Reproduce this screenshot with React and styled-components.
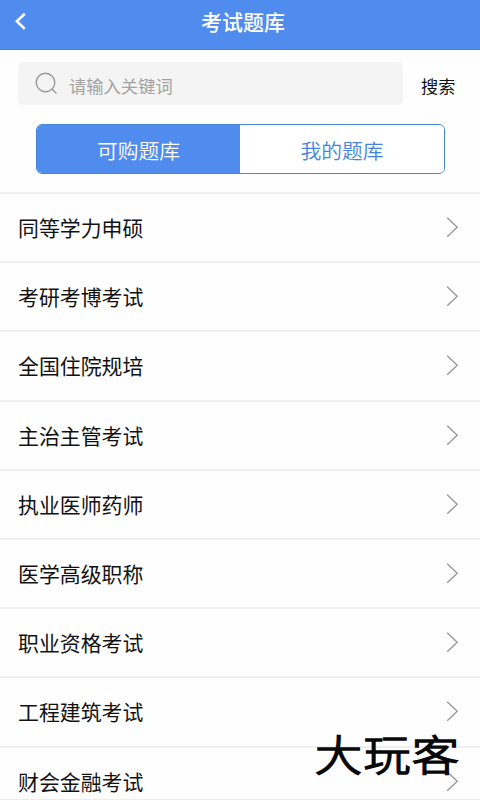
import React from "react";
import styled, { createGlobalStyle } from "styled-components";

const GlobalStyle = createGlobalStyle`
  *, *::before, *::after { box-sizing: border-box; }
  html, body { margin: 0; background: #fff; }
  body { overflow: hidden; }
`;

const Screen = styled.div`
  position: relative;
  display: flex;
  flex-direction: column;
  width: 480px;
  height: 800px;
  overflow: hidden;
  background: #fefefe;
  border-bottom: 1px solid #eee;
  color: #111;
  font-family: "Noto Sans CJK SC", sans-serif;
`;

const Header = styled.header`
  flex: none;
  display: grid;
  grid-template-columns: 42px 1fr 36px;
  align-items: center;
  height: 50px;
  padding-bottom: 7px;
  background: #508cee;
  border-bottom: 1px solid #447fe6;
`;

const BackButton = styled.button`
  display: flex;
  padding: 0 0 0 14px;
  border: 0;
  background: none;
  color: #fff;
`;

const Title = styled.h1`
  margin: 0;
  color: #fff;
  font-size: 21px;
  font-weight: 500;
  line-height: 30px;
  text-align: center;
`;

const SearchBar = styled.div`
  flex: none;
  display: flex;
  align-items: center;
  height: 43px;
  margin: 12px 0 0 18px;
`;

const SearchField = styled.div`
  display: flex;
  align-items: center;
  gap: 11px;
  width: 385px;
  height: 43px;
  padding-left: 17px;
  border-radius: 5px;
  background: #f4f4f4;
  color: #999;
`;

const Placeholder = styled.span`
  padding-top: 5px;
  color: #a2a2a2;
  font-size: 17.3px;
  font-weight: 400;
  line-height: 26px;
`;

const SearchButton = styled.button`
  padding: 5px 0 0;
  margin-left: 18px;
  border: 0;
  background: none;
  color: #111;
  font: 400 17.2px/26px "Noto Sans CJK SC", sans-serif;
`;

const Tabs = styled.div`
  flex: none;
  display: grid;
  grid-template-columns: 203px 1fr;
  width: 409px;
  height: 50px;
  margin: 19px 0 18px 36px;
  border: 1px solid #4484d9;
  border-radius: 6px;
  overflow: hidden;
`;

const Tab = styled.button`
  padding: 2px 0 0;
  border: 0;
  background: ${(p) => (p.$active ? "#508cee" : "#fff")};
  color: ${(p) => (p.$active ? "#fff" : "#4484dc")};
  font: 350 20.8px/46px "Noto Sans CJK SC", sans-serif;
`;

const List = styled.ul`
  flex: none;
  margin: 0;
  padding: 0;
  list-style: none;
`;

const Row = styled.li`
  display: flex;
  align-items: center;
  justify-content: space-between;
  height: 69.2px;
  padding: 0 21px 1px 18px;
  border-top: 2px solid #f0f0f0;
  color: #999;
`;

const RowLabel = styled.span`
  color: #111;
  font-size: 20.9px;
  line-height: 30px;
`;

const Watermark = styled.div`
  position: absolute;
  left: 315px;
  top: 728px;
  color: #090909;
  font-size: 47px;
  font-weight: 300;
  line-height: 50px;
  letter-spacing: 1.5px;
  white-space: nowrap;
  transform: scaleY(0.9);
  -webkit-text-stroke: 1.8px #090909;
`;

const BackIcon = () => (
  <svg width="13" height="18" viewBox="0 0 13 18" fill="none" stroke="currentColor" strokeWidth="2.6">
    <path d="M10.8 1.7 2.8 9.2 10.8 16.9" />
  </svg>
);

const SearchIcon = () => (
  <svg width="23" height="23" viewBox="0 0 23 23" fill="none" stroke="currentColor" strokeWidth="1.4" strokeLinecap="round">
    <circle cx="10.5" cy="10.5" r="9.3" />
    <path d="m17 17 4 4" />
  </svg>
);

const Chevron = () => (
  <svg width="13" height="20" viewBox="0 0 13 20" fill="none" stroke="currentColor" strokeWidth="1.4">
    <path d="m1.2 .8 10 9.5-10 9.5" />
  </svg>
);

const categories = [
  "同等学力申硕",
  "考研考博考试",
  "全国住院规培",
  "主治主管考试",
  "执业医师药师",
  "医学高级职称",
  "职业资格考试",
  "工程建筑考试",
  "财会金融考试",
];

export default function App() {
  return (
    <Screen>
      <GlobalStyle />
      <Header>
        <BackButton aria-label="返回"><BackIcon /></BackButton>
        <Title>考试题库</Title>
      </Header>
      <SearchBar>
        <SearchField>
          <SearchIcon />
          <Placeholder>请输入关键词</Placeholder>
        </SearchField>
        <SearchButton>搜索</SearchButton>
      </SearchBar>
      <Tabs>
        <Tab $active>可购题库</Tab>
        <Tab>我的题库</Tab>
      </Tabs>
      <List>
        {categories.map((name) => (
          <Row key={name}>
            <RowLabel>{name}</RowLabel>
            <Chevron />
          </Row>
        ))}
      </List>
      <Watermark>大玩客</Watermark>
    </Screen>
  );
}
